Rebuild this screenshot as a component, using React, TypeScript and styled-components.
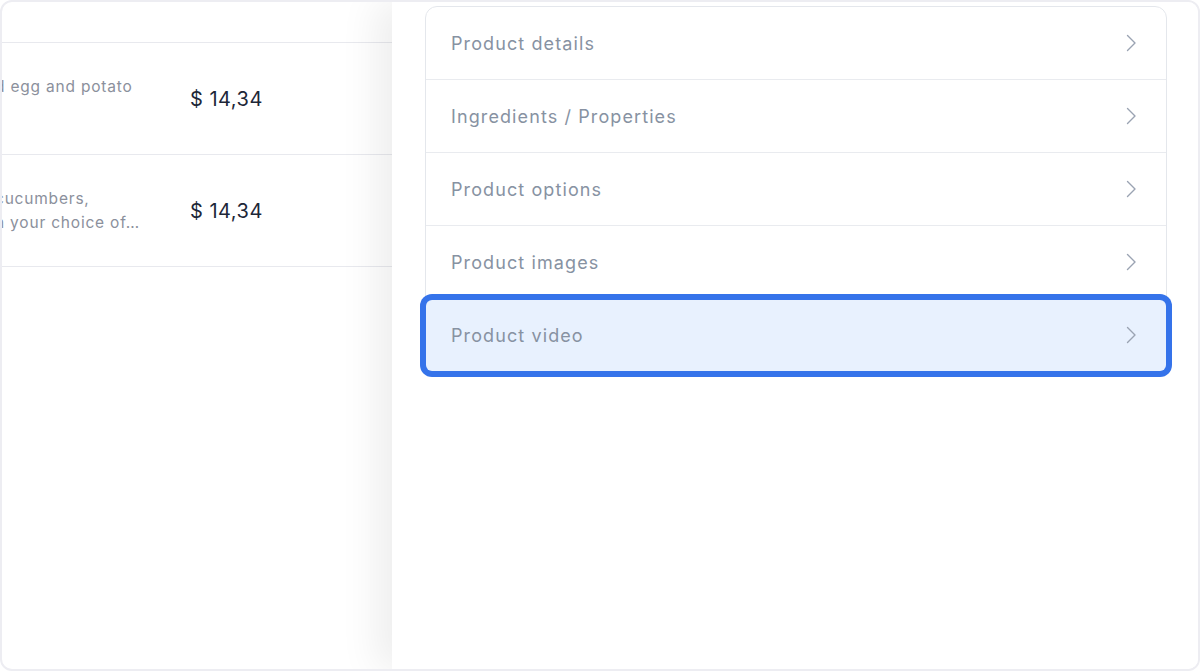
import styled, { createGlobalStyle } from "styled-components";

const GlobalStyle = createGlobalStyle`
    * {
        box-sizing: border-box;
    }
    body {
        margin: 0;
        background: #ffffff;
        font-family: Inter, "Noto Sans", Arial, sans-serif;
    }
`;

interface Product {
    lines: string[];
    price: string;
}

const products: Product[] = [
    { lines: ["d egg and potato", "\u00a0"], price: "$ 14,34" },
    { lines: ["cucumbers,", "n your choice of…"], price: "$ 14,34" },
];

const sections = [
    "Product details",
    "Ingredients / Properties",
    "Product options",
    "Product images",
    "Product video",
];

const Chevron = () => (
    <svg width="11" height="18" viewBox="0 0 11 18" fill="none">
        <path d="M1.5 1.5L9 9l-7.5 7.5" stroke="#9aa3b2" strokeWidth="1.4" strokeLinecap="round" strokeLinejoin="round" />
    </svg>
);

const App = () => {
    const active = "Product video";
    return (
        <>
            <GlobalStyle />
            <Frame>
                <ProductList>
                    <ListHeader />
                    {products.map((p, i) => (
                        <ProductRow key={i}>
                            <Description>
                                {p.lines.map((line, j) => (
                                    <DescLine key={j}>{line}</DescLine>
                                ))}
                            </Description>
                            <Price>{p.price}</Price>
                        </ProductRow>
                    ))}
                </ProductList>
                <Drawer>
                    <SectionCard>
                        {sections.map((s) => (
                            <SectionRow key={s} $active={s === active}>
                                <SectionLabel>{s}</SectionLabel>
                                <Chevron />
                            </SectionRow>
                        ))}
                    </SectionCard>
                </Drawer>
            </Frame>
        </>
    );
};

export default App;

const Frame = styled.div`
    width: 1200px;
    height: 671px;
    border: 2px solid #ededf2;
    border-radius: 12px;
    overflow: hidden;
    display: flex;
    background: #ffffff;
`;

const ProductList = styled.div`
    width: 390px;
    flex: none;
    display: flex;
    flex-direction: column;
`;

const ListHeader = styled.div`
    height: 41px;
    border-bottom: 1.5px solid #e8e9ee;
`;

const ProductRow = styled.div`
    height: 112px;
    display: flex;
    align-items: center;
    border-bottom: 1.5px solid #e8e9ee;
`;

const Description = styled.div`
    width: 195px;
    margin-left: -7px;
    flex: none;
    font-size: 15.5px;
    letter-spacing: 0.8px;
    line-height: 24px;
    color: #8b909c;
`;

const DescLine = styled.div`
    white-space: nowrap;
`;

const Price = styled.div`
    font-size: 20px;
    color: #1d2738;
    letter-spacing: 0.5px;
`;

const Drawer = styled.div`
    flex: 1;
    position: relative;
    z-index: 1;
    background: #ffffff;
    box-shadow: -16px 0 36px rgba(0, 0, 0, 0.07);
    padding: 4px 31px 0 33px;
`;

const SectionCard = styled.div`
    border: 1px solid #e4e7ec;
    border-radius: 12px;
`;

const SectionRow = styled.div<{ $active?: boolean }>`
    height: 73px;
    display: flex;
    align-items: center;
    justify-content: space-between;
    padding: 0 29px 0 25px;
    border-top: ${({ $active }) => ($active ? "none" : "1.5px solid #e9ebef")};
    background: ${({ $active }) => ($active ? "#e8f1fe" : "transparent")};
    border-radius: ${({ $active }) => ($active ? "6px" : "0")};
    box-shadow: ${({ $active }) => ($active ? "0 0 0 6px #3573ea" : "none")};
    position: ${({ $active }) => ($active ? "relative" : "static")};

    &:first-child {
        border-top: none;
        height: 72px;
    }
    ${({ $active }) => ($active ? "margin-top: 1.5px; height: 71px;" : "")}
`;

const SectionLabel = styled.span`
    font-size: 18px;
    color: #8792a2;
    letter-spacing: 1.1px;
`;
